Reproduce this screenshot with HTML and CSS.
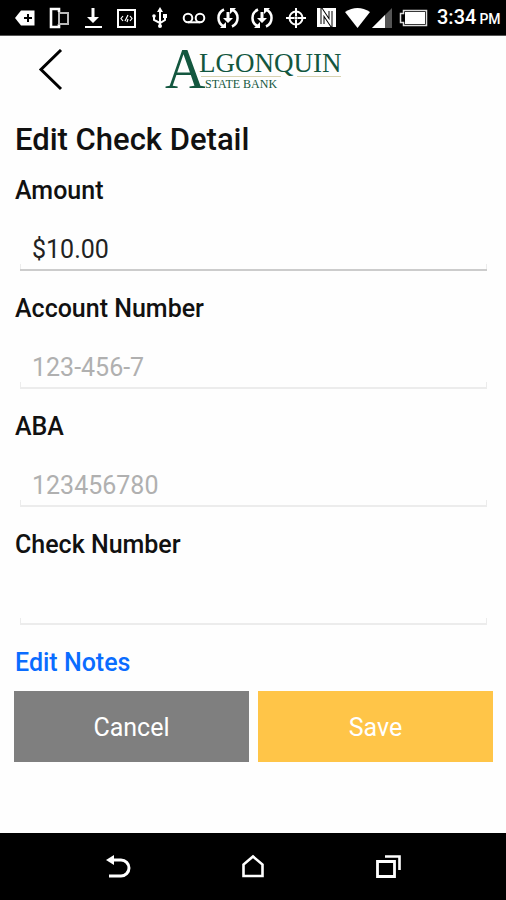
FILE: index.html
```html
<!DOCTYPE html>
<html lang="en">
<head>
<meta charset="utf-8">
<meta name="viewport" content="width=device-width, initial-scale=1">
<title>Edit Check Detail</title>
<link rel="stylesheet" href="styles.css">
</head>
<body>
<div class="status">
  <div class="notifications">
    <svg width="24" height="24" viewBox="0 0 24 24"><path d="M2 12l6-7.500h13.500v15H8z" fill="#fff"/><path d="M15 8v8M11 12h8" stroke="#000" stroke-width="2"/></svg>
    <svg width="24" height="24" viewBox="0 0 24 24" fill="none" stroke="#fff"><path d="M12 6V3H4v18h8v-3" stroke-width="2.600"/><path d="M12 7h9v11h-9z" stroke="#bbb" stroke-width="2"/></svg>
    <svg width="24" height="24" viewBox="0 0 24 24" fill="#fff"><path d="M10.500 2h3v9H18l-6 6-6-6h4.500zM4 20h17v2H4z"/></svg>
    <svg width="24" height="24" viewBox="0 0 24 24" fill="none" stroke="#fff"><path d="M3 4h17v17H3z" stroke-width="2"/><path d="M8 10L6 12.500l2 2.500M15 10l2 2.500-2 2.500M10 15l3-6M12 16l1-3" stroke-width="1.200"/></svg>
    <svg width="24" height="24" viewBox="0 0 24 24" fill="none" stroke="#fff" stroke-width="2"><path d="M12 5v15M6 10v4l6 3 5-3v-4"/><path d="M12 1l3 5H9z" fill="#fff" stroke="none"/><circle cx="12" cy="20" r="2" fill="#fff" stroke="none"/><circle cx="6" cy="10" r="1.800" fill="#fff" stroke="none"/><path d="M15 8h4v4h-4z" fill="#fff" stroke="none"/></svg>
    <svg width="24" height="24" viewBox="0 0 24 24" fill="none" stroke="#fff" stroke-width="2"><circle cx="6" cy="12" r="4.300"/><circle cx="18" cy="12" r="4.300"/><path d="M6 16.300h12"/></svg>
    <svg width="24" height="24" viewBox="0 0 24 24"><path d="M8 3.500a9.300 9.300 0 0 0 0 17M16 20.500a9.300 9.300 0 0 0 0-17" fill="none" stroke="#fff" stroke-width="2.500"/><path d="M4 22h6v-6zM20 2h-6v6zM10.500 6h3v6H17l-5 5-5-5h3.500z" fill="#fff"/></svg>
    <svg width="24" height="24" viewBox="0 0 24 24"><path d="M8 3.500a9.300 9.300 0 0 0 0 17M16 20.500a9.300 9.300 0 0 0 0-17" fill="none" stroke="#fff" stroke-width="2.500"/><path d="M4 22h6v-6zM20 2h-6v6zM10.500 6h3v6H17l-5 5-5-5h3.500z" fill="#fff"/></svg>
    <svg width="24" height="24" viewBox="0 0 24 24" fill="none" stroke="#fff" stroke-width="2"><circle cx="12" cy="12" r="6.500"/><path d="M12 2v8M12 14v8M2 12h8M14 12h8"/><circle cx="12" cy="12" r="1.800" fill="#fff" stroke="none"/></svg>
  </div>
  <svg width="26" height="36" viewBox="0 0 26 36"><path d="M2 8h19v19H2z" fill="#fff"/><path d="M7.500 24V11.500l8 12V11" fill="none" stroke="#000" stroke-width="4"/><path d="M7.500 24V11.500l8 12V11" fill="none" stroke="#fff" stroke-width="2"/></svg>
  <svg width="31" height="36" viewBox="0 0 31 36"><path d="M4 12Q16.500 4 29 12L16.500 28z" fill="#fff"/></svg>
  <svg width="24" height="36" viewBox="0 0 24 36"><path d="M20 8v20H0z" fill="#555"/><path d="M13 15v13H0z" fill="#fff"/></svg>
  <svg width="36" height="36" viewBox="0 0 36 36"><path d="M7.500 10.500h23v15h-23v-3h-3v-9h3z" fill="none" stroke="#ddd" stroke-width="1.500"/><path d="M9 12h20v12H9z" fill="#fff"/></svg>
  <div class="clock">3:34<span class="meridiem">PM</span></div>
</div>
<header class="header">
  <button class="back" type="button" aria-label="Back">
    <svg width="26" height="42" viewBox="0 0 26 42"><path d="M23 1L3 20.500 23 40" fill="none" stroke="#000" stroke-width="3"/></svg>
  </button>
  <svg class="logo" width="184" height="64" viewBox="-2 -11 184 64" role="img" aria-label="Algonquin State Bank">
    <path d="M38 27.500h80M134 27.500h44" stroke="#d8d2b0"/>
    <text class="logo-initial" x="2" y="39">A</text>
    <text class="logo-name" x="36" y="23">LGONQUIN</text>
    <text class="logo-sub" x="42" y="39">STATE BANK</text>
  </svg>
</header>
<main class="main">
  <h1 class="title">Edit Check Detail</h1>
  <form class="form">
    <div class="field">
      <label for="amount">Amount</label>
      <input class="filled" id="amount" type="text" value="$10.00">
    </div>
    <div class="field">
      <label for="account">Account Number</label>
      <input id="account" type="text" placeholder="123-456-7">
    </div>
    <div class="field">
      <label for="aba">ABA</label>
      <input id="aba" type="text" placeholder="123456780">
    </div>
    <div class="field">
      <label for="check">Check Number</label>
      <input id="check" type="text">
    </div>
    <a class="notes" href="#">Edit Notes</a>
    <div class="actions">
      <button class="cancel" type="button">Cancel</button>
      <button class="save" type="submit">Save</button>
    </div>
  </form>
</main>
<nav class="nav">
  <button type="button" aria-label="Back"><svg width="28" height="28" viewBox="0 0 28 28"><path d="M8 7h9a8 8 0 0 1 0 16H5" fill="none" stroke="#fff" stroke-width="3"/><path d="M2 7l8-5v10z" fill="#fff"/></svg></button>
  <button type="button" aria-label="Home"><svg width="28" height="28" viewBox="0 0 28 28"><path d="M4.500 23V11.500L14 3.500l9.500 8V23z" fill="none" stroke="#fff" stroke-width="2.600"/></svg></button>
  <button type="button" aria-label="Recent apps"><svg width="28" height="28" viewBox="0 0 28 28" fill="none" stroke="#fff"><path d="M3.500 8.500h17v15h-17z" stroke-width="2.800"/><path d="M11 3.500h14.500V17" stroke-width="2.600"/></svg></button>
</nav>
</body>
</html>
```
FILE: styles.css
```css
* {
  box-sizing: border-box;
}

body {
  margin: 0;
  min-height: 100vh;
  display: flex;
  flex-direction: column;
  background: #fefefe;
  color: #111;
  font: 25px/30px Roboto, sans-serif;
}

svg {
  display: block;
  flex: none;
}

button {
  border: 0;
  padding: 0;
  font: inherit;
  cursor: pointer;
}

.status {
  display: flex;
  align-items: center;
  height: 36px;
  padding: 0 6px 0 8px;
  background: #000;
  border-bottom: 1px solid #555;
  color: #fff;
}

.notifications {
  flex: 1;
  display: grid;
  grid-template-columns: repeat(9, 1fr);
  justify-items: center;
  margin-right: 2px;
}

.clock {
  width: 68px;
  padding-left: 5px;
  font-size: 20px;
  font-weight: 500;
  white-space: nowrap;
}

.meridiem {
  margin-left: 3px;
  font-size: 14px;
}

.header {
  display: grid;
  grid-template-columns: 1fr auto 1fr;
  align-items: center;
  height: 68px;
  padding: 0 8px;
}

.back {
  justify-self: start;
  margin-left: 30px;
  background: none;
}

.logo {
  fill: #13573f;
  font-family: "Liberation Serif", serif;
}

.logo-initial {
  font-size: 56px;
}

.logo-name {
  font-size: 27px;
}

.logo-sub {
  font-size: 12px;
}

.main {
  flex: 1;
  padding: 17px 13px 16px 14px;
}

.title,
.field label,
.notes {
  padding-left: 1px;
}

.title {
  margin: 0 0 17px;
  font-size: 31px;
  line-height: 38px;
  font-weight: 500;
}

.field {
  margin-bottom: 23px;
}

.field label {
  display: block;
  font-weight: 500;
}

.field input {
  display: block;
  width: calc(100% - 12px);
  height: 65px;
  margin-left: 6px;
  padding: 29px 12px 5px;
  border: 0;
  border-bottom: 2px solid #ececec;
  border-radius: 0;
  outline: 0;
  background:
    linear-gradient(#ececec, #ececec) left bottom / 1px 5px no-repeat,
    linear-gradient(#ececec, #ececec) right bottom / 1px 5px no-repeat;
  color: #222;
  font: inherit;
}

.field input.filled {
  border-color: #ccc;
}

.field input::placeholder {
  color: #b0b0b0;
  opacity: 1;
}

.notes {
  display: block;
  width: fit-content;
  color: #0a6cff;
  font-weight: 500;
  text-decoration: none;
}

.actions {
  display: grid;
  grid-template-columns: 1fr 1fr;
  gap: 9px;
  margin-top: 13px;
}

.actions button {
  height: 71px;
  padding-top: 2px;
  color: #fff;
}

.actions .cancel {
  background: #7f7f7f;
}

.actions .save {
  background: #ffc548;
}

.nav {
  display: flex;
  justify-content: center;
  align-items: center;
  gap: 107px;
  height: 67px;
  background: #000;
}

.nav button {
  background: none;
}
```
